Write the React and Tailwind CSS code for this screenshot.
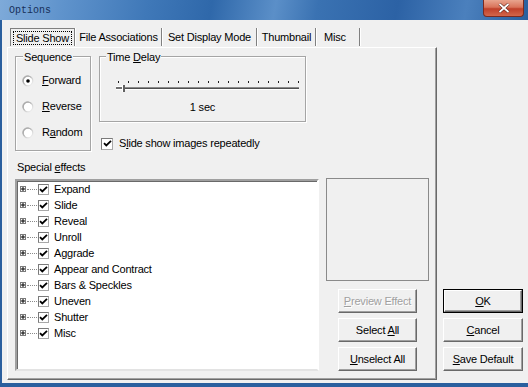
import React from "react";

const U = ({ children }) => <span className="underline underline-offset-[1px] decoration-[1px]">{children}</span>;

function Radio({ checked, id }) {
  return (
    <svg width="12" height="12" viewBox="0 0 12 12" className="shrink-0">
      <defs>
        <linearGradient id={id} x1="0" y1="0" x2="1" y2="1">
          <stop offset="0" stopColor="#8a8a8a" />
          <stop offset="0.5" stopColor="#c8c8c8" />
          <stop offset="1" stopColor="#ffffff" />
        </linearGradient>
      </defs>
      <circle cx="6" cy="6" r="5.5" fill={`url(#${id})`} />
      <circle cx="6" cy="6" r="4.2" fill="#ffffff" />
      <path d="M2.2 8.6 A4.4 4.4 0 0 1 8.6 2.2" stroke="#b0b0b0" strokeWidth="1" fill="none" />
      {checked && <circle cx="6" cy="6" r="1.8" fill="#000" />}
    </svg>
  );
}

function Check({ size = 13 }) {
  return (
    <div
      className="shrink-0 bg-white border border-t-[#7a7a7a] border-l-[#7a7a7a] border-r-[#a8a8a8] border-b-[#a8a8a8] flex items-center justify-center"
      style={{ width: size, height: size }}
    >
      <svg width="9" height="9" viewBox="0 0 9 9">
        <polyline points="1,4.2 3.3,6.5 8,1.8" fill="none" stroke="#000" strokeWidth="1.8" />
      </svg>
    </div>
  );
}

function Btn({ children, disabled, def, className = "" }) {
  const inner = (
    <div
      className={`h-full w-full flex items-center justify-center bg-[#f0f0f0] border border-t-white border-l-white border-r-[#696969] border-b-[#696969] shadow-[inset_-1px_-1px_0_#a0a0a0] ${
        disabled ? "text-[#a0a0a0] [text-shadow:1px_1px_0_#fff]" : "text-black"
      }`}
    >
      <span>{children}</span>
    </div>
  );
  if (def) {
    return <div className={`border border-black ${className}`}>{inner}</div>;
  }
  return <div className={className}>{inner}</div>;
}

function Sep() {
  return <div className="w-[2px] h-[18px] border-l border-l-[#808080] border-r border-r-white shrink-0" />;
}

function Tabs() {
  return (
    <div className="h-[19px] flex items-start pl-[3px]">
      <div className="w-[64px] h-[18px] flex items-center justify-center border-l border-l-[#808080] border-t border-t-[#808080]">
        <span className="px-[3px] py-[1px] leading-[12px] outline outline-1 outline-dotted outline-black -outline-offset-1">Slide Show</span>
      </div>
      <Sep />
      <div className="w-[85px] h-[18px] flex items-center justify-center">File Associations</div>
      <Sep />
      <div className="w-[93px] h-[18px] flex items-center justify-center">Set Display Mode</div>
      <Sep />
      <div className="w-[57px] h-[18px] flex items-center justify-center">Thumbnail</div>
      <Sep />
      <div className="w-[42px] h-[18px] flex items-center pl-[7px]">Misc</div>
      <Sep />
    </div>
  );
}

function Slider() {
  const ticks = [];
  for (let i = 0; i < 19; i++) {
    const x = 2 + i * 10;
    ticks.push(<rect key={i} x={x} y={0} width={1} height={2} fill="#202020" />);
  }
  return (
    <svg width="184" height="12" viewBox="0 0 184 12" className="block">
      {ticks}
      <rect x="0" y="6" width="183" height="1" fill="#8a8a8a" />
      <rect x="0" y="7" width="183" height="1" fill="#505050" />
      <rect x="0" y="8" width="183" height="1" fill="#ffffff" />
      <rect x="0" y="5" width="7" height="1" fill="#ffffff" />
      <rect x="0" y="6" width="7" height="2" fill="#707070" />
      <rect x="6" y="4" width="1" height="7" fill="#ffffff" />
      <rect x="7" y="4" width="2" height="7" fill="#606060" />
    </svg>
  );
}

const effects = [
  "Expand",
  "Slide",
  "Reveal",
  "Unroll",
  "Aggrade",
  "Appear and Contract",
  "Bars & Speckles",
  "Uneven",
  "Shutter",
  "Misc",
];

function TreeRow({ label }) {
  return (
    <div className="h-[16px] flex items-center pl-[3px]">
      <svg width="6" height="6" viewBox="0 0 6 6" className="shrink-0">
        <rect x="0.5" y="0.5" width="5" height="5" fill="#fff" stroke="#7a7a7a" />
        <rect x="1" y="2.5" width="4" height="1" fill="#000" />
        <rect x="2.5" y="1" width="1" height="4" fill="#000" />
      </svg>
      <div className="w-[10px] mx-[1px] border-t border-dotted border-[#8a8a8a]" />
      <Check size={11} />
      <span className="ml-[5px]">{label}</span>
    </div>
  );
}

export default function App() {
  return (
    <div className="w-[528px] h-[387px] flex flex-col bg-[#2a5f9e] overflow-hidden font-['Liberation_Sans',Arial,sans-serif] text-[11px] leading-[13px] text-black tracking-[-0.2px]">
      {/* Title bar */}
      <div className="h-[20px] shrink-0 flex items-start bg-[linear-gradient(100deg,#7eaad9_0%,#5f93cc_12%,#3f78b8_28%,#2f68aa_40%,#5b8fc8_52%,#3a72b2_60%,#2c62a5_75%,#4b80bd_88%,#2a5f9e_100%)]">
        <span className="ml-[9px] mt-[5px] font-['Liberation_Mono',monospace] text-[10px] leading-[12px] tracking-normal text-[#17305a]">
          Options
        </span>
        <div className="ml-auto mr-[4px] w-[41px] h-[17px] rounded-b-[4px] border border-t-0 border-[#7a2a20] bg-[linear-gradient(180deg,#e8a48e_0%,#d9735a_45%,#c0402a_55%,#d2664a_100%)] flex items-center justify-center">
          <svg width="12" height="10" viewBox="0 0 12 10">
            <path d="M1.5 1 L10.5 9 M10.5 1 L1.5 9" stroke="#4a1a12" strokeWidth="3" />
            <path d="M1.5 1 L10.5 9 M10.5 1 L1.5 9" stroke="#ffffff" strokeWidth="1.8" />
          </svg>
        </div>
      </div>

      {/* Body */}
      <div className="flex-1 ml-[2px] mb-[4px] bg-[#f0f0f0] flex">
        <div className="ml-[5px] mt-[8px] w-[430px] flex flex-col">
          <Tabs />
          <div className="h-[333px] border border-t-white border-l-white border-r-[#696969] border-b-[#696969] shadow-[inset_-1px_-1px_0_#a0a0a0] pl-[7px] pt-[8px] flex flex-col">
            {/* Row 1 */}
            <div className="flex items-start">
              {/* Sequence */}
              <div className="relative w-[76px] h-[95px] border border-[#a5a5a5] shadow-[inset_1px_1px_0_#fff,1px_1px_0_#fff]">
                <span className="absolute -top-[6px] left-[7px] px-[1px] bg-[#f0f0f0] leading-[12px]">Sequence</span>
                <div className="flex flex-col pt-[17px] pl-[6px] gap-[13px]">
                  <div className="flex items-center gap-[8px] h-[13px]">
                    <Radio checked id="r1" />
                    <span><U>F</U>orward</span>
                  </div>
                  <div className="flex items-center gap-[8px] h-[13px]">
                    <Radio id="r2" />
                    <span><U>R</U>everse</span>
                  </div>
                  <div className="flex items-center gap-[8px] h-[13px]">
                    <Radio id="r3" />
                    <span>R<U>a</U>ndom</span>
                  </div>
                </div>
              </div>
              {/* Time Delay column */}
              <div className="ml-[8px] flex flex-col">
                <div className="relative w-[207px] h-[66px] border border-[#a5a5a5] shadow-[inset_1px_1px_0_#fff,1px_1px_0_#fff] flex flex-col">
                  <span className="absolute -top-[6px] left-[6px] px-[1px] bg-[#f0f0f0] leading-[12px]">Time <U>D</U>elay</span>
                  <div className="mt-[24px] pl-[16px]">
                    <Slider />
                  </div>
                  <div className="mt-[8px] text-center">1 sec</div>
                </div>
                <div className="mt-[15px] ml-[2px] flex items-center gap-[6px]">
                  <Check size={12} />
                  <span>S<U>l</U>ide show images repeatedly</span>
                </div>
              </div>
            </div>

            <div className="mt-[10px] ml-[2px]">Special <U>e</U>ffects</div>

            {/* List row */}
            <div className="mt-[5px] flex items-start">
              <div className="w-[304px] h-[192px] bg-white border-2 border-t-[#a0a0a0] border-l-[#a0a0a0] border-r-white border-b-[#e3e3e3] shadow-[inset_1px_1px_0_#696969] pt-0">
                {effects.map((e) => (
                  <TreeRow key={e} label={e} />
                ))}
              </div>
              <div className="ml-[7px] -mt-[1px] flex flex-col">
                <div className="w-[103px] h-[103px] border border-[#8a8a8a]" />
                <div className="ml-[12px] mt-[8px] flex flex-col gap-[5px]">
                  <Btn disabled className="w-[79px] h-[24px]"><U>P</U>review Effect</Btn>
                  <Btn className="w-[79px] h-[24px]">Select <U>A</U>ll</Btn>
                  <Btn className="w-[79px] h-[24px]"><U>U</U>nselect All</Btn>
                </div>
              </div>
            </div>
          </div>
        </div>

        {/* Right buttons */}
        <div className="ml-[6px] w-[80px] flex flex-col justify-end pb-[12px] gap-[5px]">
          <Btn def className="w-[80px] h-[24px]"><U>O</U>K</Btn>
          <Btn className="w-[80px] h-[24px]"><U>C</U>ancel</Btn>
          <Btn className="w-[80px] h-[24px]"><U>S</U>ave Default</Btn>
        </div>
      </div>
    </div>
  );
}
